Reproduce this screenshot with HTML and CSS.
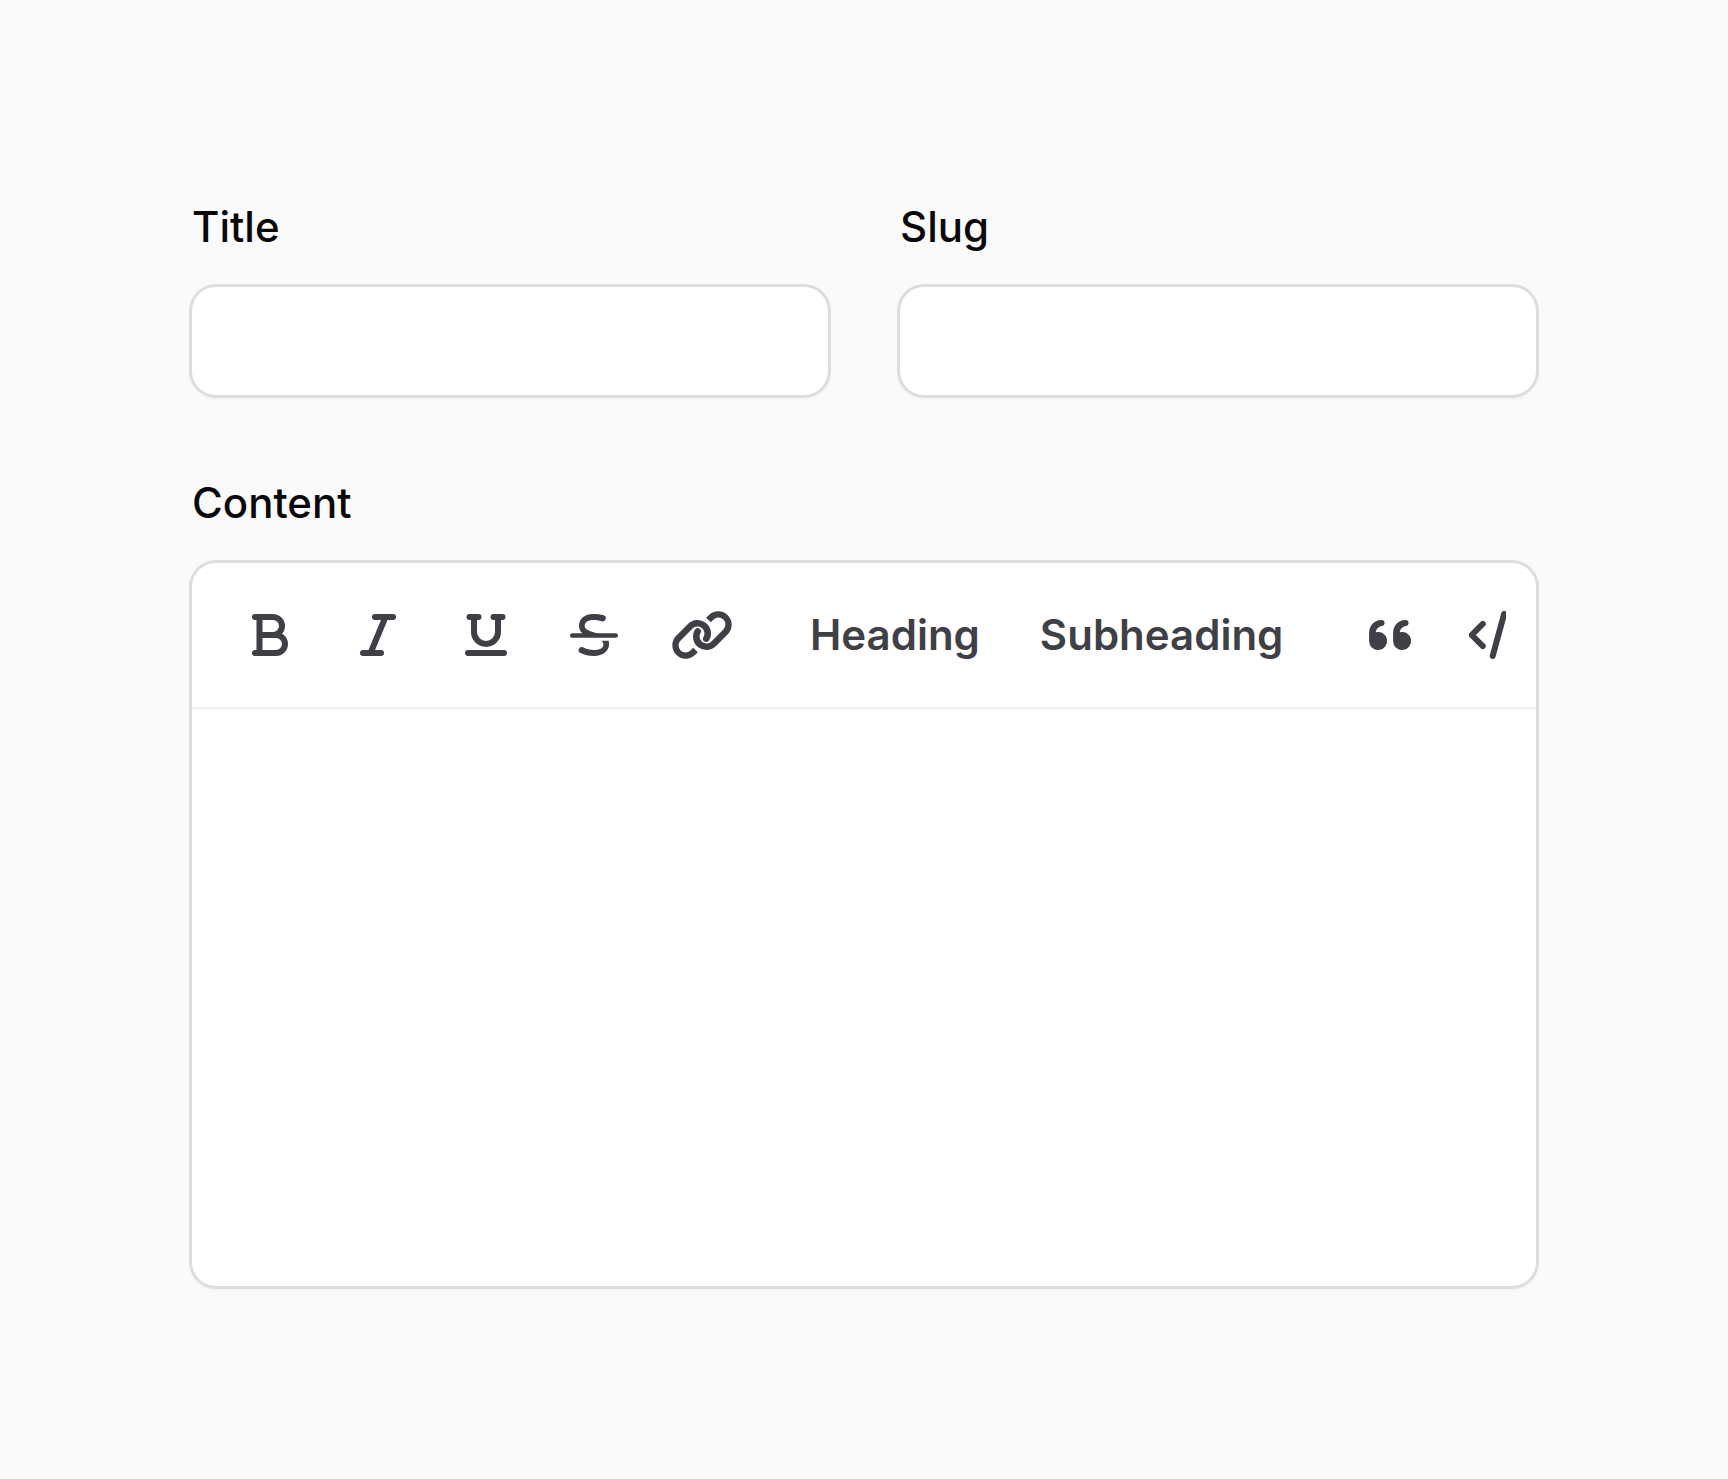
FILE: index.html
```html
<!DOCTYPE html>
<html lang="en">
<head>
    <meta charset="UTF-8">
    <meta name="viewport" content="width=device-width, initial-scale=1.0">
    <title>Edit Post</title>
    <link rel="stylesheet" href="styles.css">
</head>
<body>
    <form class="post-form">
        <!-- Title and slug -->
        <div class="field">
            <label for="title">Title</label>
            <input type="text" id="title" class="box">
        </div>

        <div class="field">
            <label for="slug">Slug</label>
            <input type="text" id="slug" class="box">
        </div>

        <!-- Rich text editor -->
        <div class="field field-wide">
            <label for="content">Content</label>
            <div class="box editor">
                <div class="toolbar">
                    <div class="toolbar-groups">
                        <div class="group">
                            <button type="button" class="tool" aria-label="Bold">
                                <svg class="icon" viewBox="0 0 20 20">
                                    <path d="M5 4h6a3 3 0 0 1 0 6H6.5M11 10h1a3 3 0 0 1 0 6H5M6.5 4v12"/>
                                </svg>
                            </button>
                            <button type="button" class="tool" aria-label="Italic">
                                <svg class="icon" viewBox="0 0 20 20">
                                    <path d="M9 4h6M5 16h6M12.5 4l-5 12"/>
                                </svg>
                            </button>
                            <button type="button" class="tool" aria-label="Underline">
                                <svg class="icon" viewBox="0 0 20 20">
                                    <path d="M4.5 4h3M12.5 4h3M6 4v5a4 4 0 0 0 8 0V4M4 16h12"/>
                                </svg>
                            </button>
                            <button type="button" class="tool" aria-label="Strikethrough">
                                <svg class="icon" viewBox="0 0 20 20">
                                    <path class="solid" d="M13.2 3.4A1 1 0 0 1 12.6 5.4C11.6 5.1 10.7 5 9.9 5C7.9 5 6.9 5.8 6.9 6.9C6.9 8.3 8.5 8.7 11.8 9.6V10H6.8C5.6 9.2 5 8.2 5 7C5 4.6 6.8 3 9.8 3C11 3 12.2 3.1 13.2 3.4Z"/>
                                    <path class="thin" d="M2.75 10.2h14.5"/>
                                    <path class="solid" d="M12.4 11.9H14.9C15.6 14.7 13.6 17 9.8 17C8.2 17 6.8 16.6 5.5 16A1 1 0 0 1 6.3 14.1C7.5 14.7 8.6 15 9.8 15C12.3 15 13.4 14 13.1 12.8C13 12.3 12.7 12.2 12.4 11.9Z"/>
                                </svg>
                            </button>
                            <button type="button" class="tool" aria-label="Link">
                                <svg class="icon" viewBox="0 0 20 20">
                                    <path class="solid" d="M7.06 14.21L8.6 15.75L7.68 16.68A4.5 4.5 0 0 1 1.32 10.32L5.32 6.32A4.5 4.5 0 0 1 12.4 11.75A1.1 1.1 0 0 1 10.49 10.65A2.3 2.3 0 0 0 6.87 7.87L2.87 11.87A2.3 2.3 0 0 0 6.13 15.13Z"/>
                                    <path class="solid" d="M12.94 5.79L11.4 4.25L12.32 3.32A4.5 4.5 0 0 1 18.68 9.68L14.68 13.68A4.5 4.5 0 0 1 7.6 8.25A1.1 1.1 0 0 1 9.51 9.35A2.3 2.3 0 0 0 13.13 12.13L17.13 8.13A2.3 2.3 0 0 0 13.87 4.87Z"/>
                                </svg>
                            </button>
                        </div>
                        <div class="group">
                            <button type="button" class="tool tool-text">Heading</button>
                            <button type="button" class="tool tool-text">Subheading</button>
                        </div>
                        <div class="group">
                            <button type="button" class="tool" aria-label="Quote">
                                <svg class="icon" viewBox="0 0 20 20">
                                    <path class="solid" d="M6.8 5a1 1 0 0 1 .1 2C5.8 7.2 5 8 4.9 9.1A3 3 0 1 1 2.7 12V9.6C2.7 6.8 4.4 5 6.8 5Z"/>
                                    <path class="solid" d="M14.8 5a1 1 0 0 1 .1 2C13.8 7.2 13 8 12.9 9.1A3 3 0 1 1 10.7 12V9.6C10.7 6.8 12.4 5 14.8 5Z"/>
                                </svg>
                            </button>
                            <button type="button" class="tool" aria-label="Code block">
                                <svg class="icon" viewBox="0 0 20 20">
                                    <path d="M4.6 6.3L0.9 10l3.7 3.7M11.7 3L7.9 17M15 6.3l3.7 3.7l-3.7 3.7"/>
                                </svg>
                            </button>
                        </div>
                    </div>
                </div>
                <textarea id="content"></textarea>
            </div>
        </div>
    </form>
</body>
</html>
```
FILE: styles.css
```css
* {
    box-sizing: border-box;
    margin: 0;
    padding: 0;
}

body {
    font-family: Inter, sans-serif;
    font-size: 42px;
    line-height: 72px;
    background: #fafafa;
    color: #09090b;
    padding: 191px 192px;
}

/* Form layout */
.post-form {
    display: grid;
    grid-template-columns: 1fr 1fr;
    gap: 72px;
}

.field {
    display: flex;
    flex-direction: column;
    gap: 24px;
    min-width: 0;
}

.field-wide {
    grid-column: 1 / -1;
}

label {
    font-weight: 500;
}

/* White box with a ring, used by the inputs and the editor */
.box {
    background: #fff;
    border: none;
    border-radius: 24px;
    box-shadow: 0 0 0 3px #dddddd, 0 3px 6px rgba(0, 0, 0, 0.05);
}

input,
textarea {
    width: 100%;
    font: inherit;
    color: inherit;
    outline: none;
}

input {
    height: 108px;
    padding: 18px 36px;
}

/* Toolbar */
.toolbar {
    padding: 24px 30px;
    border-bottom: 3px solid #f3f3f4;
}

.toolbar-groups {
    display: flex;
    gap: 36px;
    overflow: hidden;
}

.group {
    display: flex;
    flex-shrink: 0;
    gap: 12px;
}

.tool {
    display: flex;
    align-items: center;
    justify-content: center;
    width: 96px;
    height: 96px;
    background: none;
    border: none;
    border-radius: 24px;
    color: #3f3f46;
    font: inherit;
    font-weight: 600;
    cursor: pointer;
}

.tool:hover {
    background: #fafafa;
}

.tool-text {
    width: auto;
    padding: 0 24px;
}

/* Icons */
.icon {
    width: 60px;
    height: 60px;
    fill: none;
    stroke: currentColor;
    stroke-width: 2;
    stroke-linecap: round;
    stroke-linejoin: round;
}

.icon .thin {
    stroke-width: 1.5;
}

.icon .solid {
    fill: currentColor;
    stroke: none;
}

/* Writing area */
textarea {
    display: block;
    min-height: 576px;
    padding: 36px;
    background: none;
    border: none;
    resize: none;
}
```
